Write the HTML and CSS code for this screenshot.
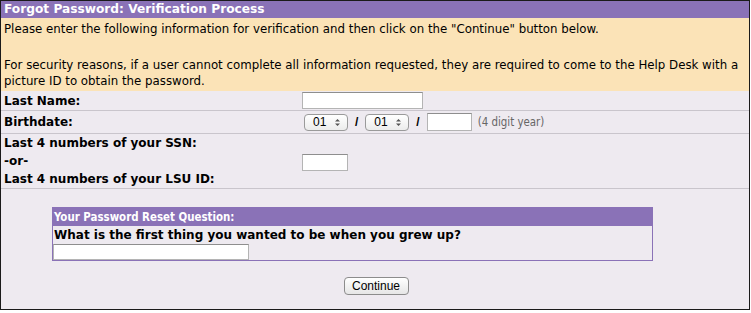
FILE: index.html
```html
<!DOCTYPE html>
<html>
<head>
<meta charset="utf-8">
<link rel="stylesheet" href="styles.css">
</head>
<body>
<div class="panel">
  <div class="title">Forgot Password: Verification Process</div>
  <div class="intro">
    <p class="p1">Please enter the following information for verification and then click on the "Continue" button below.</p>
    <p class="p2">For security reasons, if a user cannot complete all information requested, they are required to come to the Help Desk with a picture ID to obtain the password.</p>
  </div>
  <div class="row r-name">
    <div class="label">Last Name:</div>
    <div class="field"><span class="input w-name"></span></div>
  </div>
  <div class="row r-birth">
    <div class="label">Birthdate:</div>
    <div class="field">
      <span class="select">01<svg class="arr" width="7" height="9" viewBox="0 0 7 9"><path d="M1 3.5 L3.5 1 L6 3.5 Z M1 5.5 L3.5 8 L6 5.5 Z" fill="#555"/></svg></span>
      <span class="slash">/</span>
      <span class="select">01<svg class="arr" width="7" height="9" viewBox="0 0 7 9"><path d="M1 3.5 L3.5 1 L6 3.5 Z M1 5.5 L3.5 8 L6 5.5 Z" fill="#555"/></svg></span>
      <span class="slash">/</span>
      <span class="input w-year"></span>
      <span class="hint">(4 digit year)</span>
    </div>
  </div>
  <div class="row r-ssn">
    <div class="label stack">
      <div>Last 4 numbers of your SSN:</div>
      <div>-or-</div>
      <div>Last 4 numbers of your LSU ID:</div>
    </div>
    <div class="field"><span class="input w-ssn"></span></div>
  </div>
  <div class="question">
    <div class="q-head">Your Password Reset Question:</div>
    <div class="q-text">What is the first thing you wanted to be when you grew up?</div>
    <span class="input w-answer"></span>
  </div>
  <div class="actions"><span class="button">Continue</span></div>
</div>
</body>
</html>
```
FILE: styles.css
```css
html, body { margin: 0; padding: 0; background: #fff; }
body { font-family: "DejaVu Sans", sans-serif; font-size: 12px; color: #000; }
.panel {
  width: 750px; height: 310px; box-sizing: border-box;
  border: 1px solid #1a1a1a; background: #eeeaf0;
  display: flex; flex-direction: column;
}
.title {
  background: #8a72b7; color: #fff; font-weight: bold; font-size: 12.2px;
  height: 17px; line-height: 17px; padding-left: 3px;
}
.intro { background: #fbe3b7; padding: 3px 1px 2px 3px; line-height: 16px; font-size: 11.8px; }
.intro p { margin: 0; }
.intro .p2 { margin-top: 20px; }
.row {
  display: grid; grid-template-columns: 301px 1fr;
  border-bottom: 1px solid #c9c5cc; align-items: center;
}
.label { font-weight: bold; padding-left: 3px; }
.r-name { height: 19px; }
.r-birth { height: 22px; }
.r-ssn { height: 54px; }
.stack { line-height: 18px; }
.field { display: flex; align-items: center; }
.input {
  display: inline-block; box-sizing: border-box; background: #fff;
  border: 1px solid #b4b4b4; border-top-color: #8e8e8e;
}
.w-name { width: 121px; height: 17px; }
.w-year { width: 45px; height: 18px; }
.w-ssn { width: 46px; height: 17px; margin-top: 3px; }
.select {
  display: inline-flex; align-items: center; justify-content: space-between; box-sizing: border-box;
  width: 44px; height: 17px; padding: 0 6px 0 8px;
  border: 1px solid #9a9a9a; border-radius: 4px;
  background: linear-gradient(#ffffff, #ececec);
  font-family: "Liberation Sans", sans-serif; font-size: 12px;
}
.select:first-child { margin-left: 2px; }
.slash { font-weight: bold; margin: 0 7px; font-family: "Liberation Sans", sans-serif; font-size: 12px; }
.hint { color: #666; font-family: "DejaVu Sans Condensed", sans-serif; font-size: 11.4px; margin-left: 6px; }
.question {
  margin: 18px 0 0 51px; width: 601px; box-sizing: border-box;
  border: 1px solid #8a72b7; display: flex; flex-direction: column; align-items: flex-start;
}
.q-head {
  align-self: stretch; background: #8a72b7; color: #fff; font-weight: bold;
  font-family: "DejaVu Sans Condensed", sans-serif; font-size: 11.4px;
  height: 18px; line-height: 18px; padding-left: 1px;
}
.q-text { font-weight: bold; height: 18px; line-height: 18px; padding-left: 1px; font-size: 12px; }
.w-answer { width: 196px; height: 16px; }
.actions { display: flex; justify-content: center; margin-top: 16px; padding-left: 2px; }
.button {
  display: inline-flex; align-items: center; justify-content: center; box-sizing: border-box;
  width: 65px; height: 18px; border: 1px solid #8c8c8c; border-radius: 4px;
  background: linear-gradient(#ffffff, #e6e6e6);
  font-family: "Liberation Sans", sans-serif; font-size: 12px;
}
```
